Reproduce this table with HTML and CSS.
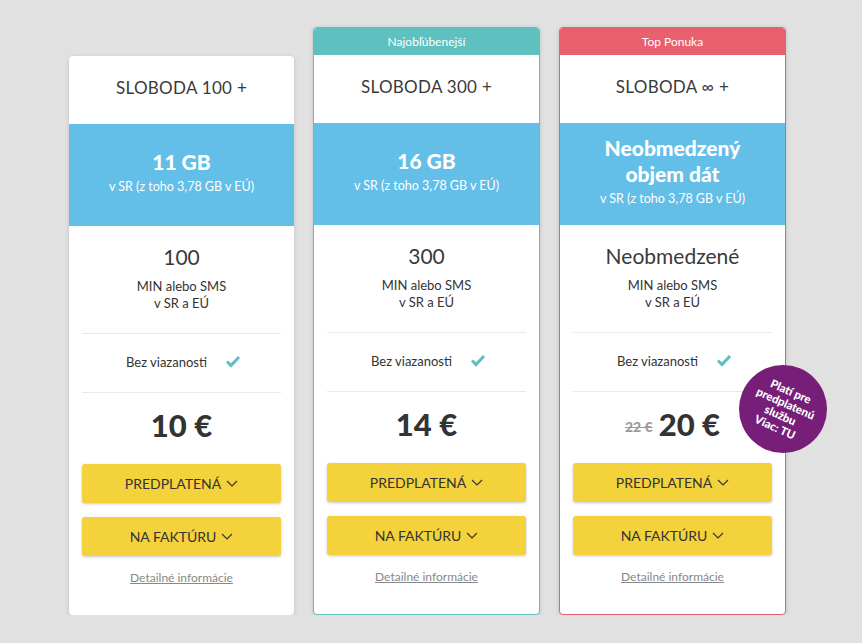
FILE: index.html
```html
<!DOCTYPE html>
<html lang="sk">
<head>
  <meta charset="UTF-8" />
  <meta name="viewport" content="width=device-width, initial-scale=1.0"/>
  <title>Sloboda paušály</title>
  <link rel="stylesheet" href="styles.css">
</head>
<body>

  <div class="plans">

    <div class="card">
      <div class="name">SLOBODA 100 +</div>
      <div class="data">
        <div class="amount">11 GB</div>
        <div class="note">v SR (z toho 3,78 GB v EÚ)</div>
      </div>
      <div class="body">
        <div class="minutes">
          <div class="count">100</div>
          <div class="desc">MIN alebo SMS<br>v SR a EÚ</div>
        </div>
        <div class="commit">
          Bez viazanosti
          <svg class="check" width="16" height="13" viewBox="0 0 16 13"><polyline points="2,6.5 6,10.5 14,2" fill="none" stroke="#5cbfc2" stroke-width="3"/></svg>
        </div>
        <div class="price">10 €</div>
        <button class="btn">PREDPLATENÁ <svg width="12" height="7" viewBox="0 0 12 7"><polyline points="1,1 6,6 11,1" fill="none" stroke="#333" stroke-width="1.1"/></svg></button>
        <button class="btn">NA FAKTÚRU <svg width="12" height="7" viewBox="0 0 12 7"><polyline points="1,1 6,6 11,1" fill="none" stroke="#333" stroke-width="1.1"/></svg></button>
        <a class="more" href="#">Detailné informácie</a>
      </div>
    </div>

    <div class="card popular">
      <div class="tag">Najobľúbenejší</div>
      <div class="name">SLOBODA 300 +</div>
      <div class="data">
        <div class="amount">16 GB</div>
        <div class="note">v SR (z toho 3,78 GB v EÚ)</div>
      </div>
      <div class="body">
        <div class="minutes">
          <div class="count">300</div>
          <div class="desc">MIN alebo SMS<br>v SR a EÚ</div>
        </div>
        <div class="commit">
          Bez viazanosti
          <svg class="check" width="16" height="13" viewBox="0 0 16 13"><polyline points="2,6.5 6,10.5 14,2" fill="none" stroke="#5cbfc2" stroke-width="3"/></svg>
        </div>
        <div class="price">14 €</div>
        <button class="btn">PREDPLATENÁ <svg width="12" height="7" viewBox="0 0 12 7"><polyline points="1,1 6,6 11,1" fill="none" stroke="#333" stroke-width="1.1"/></svg></button>
        <button class="btn">NA FAKTÚRU <svg width="12" height="7" viewBox="0 0 12 7"><polyline points="1,1 6,6 11,1" fill="none" stroke="#333" stroke-width="1.1"/></svg></button>
        <a class="more" href="#">Detailné informácie</a>
      </div>
    </div>

    <div class="card top">
      <div class="tag">Top Ponuka</div>
      <div class="name">SLOBODA ∞ +</div>
      <div class="data">
        <div class="amount">Neobmedzený<br>objem dát</div>
        <div class="note">v SR (z toho 3,78 GB v EÚ)</div>
      </div>
      <div class="body">
        <div class="minutes">
          <div class="count">Neobmedzené</div>
          <div class="desc">MIN alebo SMS<br>v SR a EÚ</div>
        </div>
        <div class="commit">
          Bez viazanosti
          <svg class="check" width="16" height="13" viewBox="0 0 16 13"><polyline points="2,6.5 6,10.5 14,2" fill="none" stroke="#5cbfc2" stroke-width="3"/></svg>
        </div>
        <div class="price"><span class="old">22 €</span> 20 €</div>
        <button class="btn">PREDPLATENÁ <svg width="12" height="7" viewBox="0 0 12 7"><polyline points="1,1 6,6 11,1" fill="none" stroke="#333" stroke-width="1.1"/></svg></button>
        <button class="btn">NA FAKTÚRU <svg width="12" height="7" viewBox="0 0 12 7"><polyline points="1,1 6,6 11,1" fill="none" stroke="#333" stroke-width="1.1"/></svg></button>
        <a class="more" href="#">Detailné informácie</a>
      </div>
      <a class="badge" href="#"><span>Platí pre<br>predplatenú<br>službu<br>Viac: TU</span></a>
    </div>

  </div>

</body>
</html>
```

FILE: styles.css
```css
* {
  box-sizing: border-box;
}
body {
  margin: 0;
  background: #e1e1e1;
  font-family: 'Lato', 'Noto Sans', sans-serif;
  color: #333;
}
.plans {
  display: flex;
  align-items: flex-end;
  gap: 19px;
  padding: 27px 0 0 69px;
}
.card {
  position: relative;
  width: 225px;
  background: #fff;
  border-radius: 4px;
  box-shadow: 0 1px 4px rgba(0, 0, 0, 0.15);
}
.popular,
.top {
  width: 227px;
  border: 1px solid #5fc0c0;
}
.top {
  border-color: #e8606e;
}
.tag {
  height: 27px;
  line-height: 27px;
  text-align: center;
  font-size: 12px;
  color: #fff;
  background: #5fc0c0;
  border-radius: 3px 3px 0 0;
}
.top .tag {
  background: #e8606e;
}
.name {
  height: 68px;
  line-height: 64px;
  text-align: center;
  font-size: 17px;
  letter-spacing: 0.3px;
  color: #3a3a3a;
}
.data {
  height: 102px;
  background: #63bee8;
  color: #fff;
  display: flex;
  flex-direction: column;
  justify-content: center;
  align-items: center;
  text-align: center;
  padding-bottom: 8px;
}
.amount {
  font-size: 21px;
  font-weight: 900;
  line-height: 26px;
}
.note {
  font-size: 12.5px;
  margin-top: 4px;
}
.body {
  padding: 0 13px 30px;
  display: flex;
  flex-direction: column;
  align-items: stretch;
}
.minutes {
  text-align: center;
  padding: 18px 0 21px;
  border-bottom: 1px solid #e9e9e9;
}
.count {
  font-size: 21px;
  line-height: 26px;
  color: #3a3a3a;
  margin-bottom: 8px;
}
.desc {
  font-size: 13px;
  line-height: 17px;
}
.commit {
  height: 59px;
  display: flex;
  justify-content: center;
  align-items: center;
  gap: 18px;
  font-size: 13px;
  border-bottom: 1px solid #e9e9e9;
  padding: 0 0 3px 4px;
}
.price {
  height: 71px;
  display: flex;
  justify-content: center;
  align-items: flex-start;
  gap: 6px;
  padding-top: 13px;
  font-size: 31px;
  font-weight: 900;
  color: #333;
}
.old {
  font-size: 14px;
  color: #9a9a9a;
  text-decoration: line-through;
  margin-top: 13px;
}
.btn {
  height: 39px;
  border: none;
  border-radius: 3px;
  background: #f3d23c;
  box-shadow: 0 1px 3px rgba(0, 0, 0, 0.22);
  font-family: inherit;
  font-size: 14px;
  color: #333;
  display: flex;
  justify-content: center;
  align-items: center;
  gap: 5px;
  cursor: pointer;
}
.btn + .btn {
  margin-top: 14px;
}
.more {
  margin-top: 14px;
  text-align: center;
  font-size: 12px;
  color: #888;
  text-decoration: underline;
}
.badge {
  position: absolute;
  right: -42px;
  top: 337px;
  width: 88px;
  height: 88px;
  border-radius: 50%;
  background: #761e78;
  color: #fff;
  text-decoration: none;
  display: flex;
  justify-content: center;
  align-items: center;
  text-align: center;
  font-size: 11.5px;
  font-weight: 900;
  line-height: 13px;
}
.badge span {
  transform: rotate(24deg);
}
```
